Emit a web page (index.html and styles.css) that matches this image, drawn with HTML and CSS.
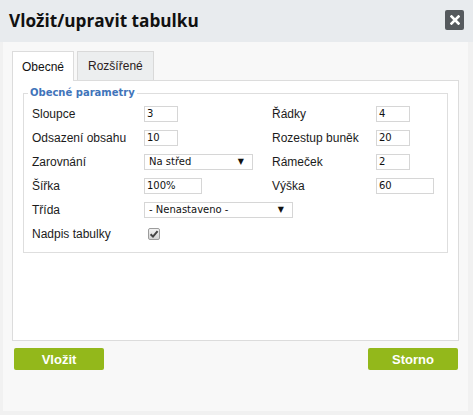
FILE: index.html
```html
<!DOCTYPE html>
<html lang="cs">
<head>
<meta charset="utf-8">
<title>Vložit/upravit tabulku</title>
<link rel="stylesheet" href="styles.css">
</head>
<body>
<div class="header">
  <h1 class="title">Vložit/upravit tabulku</h1>
  <button class="close" type="button" aria-label="Zavřít">
    <svg width="10" height="10" viewBox="0 0 10 10"><path d="M1.5 1.5 L8.5 8.5 M8.5 1.5 L1.5 8.5" stroke="#fff" stroke-width="2.6" stroke-linecap="square"/></svg>
  </button>
</div>
<div class="dialog">
  <div class="tabs">
    <div class="tab active">Obecné</div>
    <div class="tab">Rozšířené</div>
  </div>
  <div class="panel">
    <fieldset class="group">
      <legend>Obecné parametry</legend>
      <div class="grid">
        <label class="lbl">Sloupce</label>
        <div class="cell"><span class="field w34">3</span></div>
        <label class="lbl">Řádky</label>
        <div class="cell"><span class="field w34">4</span></div>

        <label class="lbl">Odsazení obsahu</label>
        <div class="cell"><span class="field w34">10</span></div>
        <label class="lbl">Rozestup buněk</label>
        <div class="cell"><span class="field w34">20</span></div>

        <label class="lbl">Zarovnání</label>
        <div class="cell"><span class="select w109"><span class="sel-text">Na střed</span><span class="arrow">▼</span></span></div>
        <label class="lbl">Rámeček</label>
        <div class="cell"><span class="field w34">2</span></div>

        <label class="lbl">Šířka</label>
        <div class="cell"><span class="field w58">100%</span></div>
        <label class="lbl">Výška</label>
        <div class="cell"><span class="field w58">60</span></div>

        <label class="lbl">Třída</label>
        <div class="cell span3"><span class="select w149"><span class="sel-text">- Nenastaveno -</span><span class="arrow">▼</span></span></div>

        <label class="lbl">Nadpis tabulky</label>
        <div class="cell span3"><span class="check"><svg width="10" height="10" viewBox="0 0 10 10"><path d="M1.6 5.2 L4 7.6 L8.6 2.2" fill="none" stroke="#444" stroke-width="2"/></svg></span></div>
      </div>
    </fieldset>
  </div>
  <div class="buttons">
    <button class="btn" type="button">Vložit</button>
    <button class="btn" type="button">Storno</button>
  </div>
</div>
</body>
</html>
```

FILE: styles.css
```css
html, body {
  margin: 0;
  padding: 0;
}
body {
  background: #f1f1f1;
  font-family: "Liberation Sans", Arial, sans-serif;
  width: 473px;
  height: 415px;
  overflow: hidden;
}
.header {
  height: 42px;
  background: #e8ebee;
  display: flex;
  align-items: center;
  justify-content: space-between;
  padding: 0 9px 0 9px;
  box-sizing: border-box;
}
.title {
  margin: 0;
  font-family: "Open Sans", sans-serif;
  font-weight: 700;
  font-size: 17.2px;
  color: #111;
  line-height: 20px;
  margin-top: -1px;
}
.close {
  width: 19px;
  height: 20px;
  border: 0;
  padding: 0;
  border-radius: 2px;
  background: #565a5e;
  display: flex;
  align-items: center;
  justify-content: center;
  margin-top: -3px;
}
.close svg { display: block; }
.dialog {
  margin: 0 5px 0 3px;
  height: 369px;
  background: #f8f8f8;
  padding: 9px 9px 0 9px;
  box-sizing: border-box;
}
.tabs {
  display: flex;
  gap: 3px;
  height: 29px;
  position: relative;
  z-index: 1;
}
.tab {
  box-sizing: border-box;
  height: 29px;
  border: 1px solid #d9d9d9;
  border-bottom: 0;
  background: #eceeef;
  font-size: 12px;
  color: #222;
  padding: 0 9px;
  display: flex;
  align-items: center;
  padding-top: 0;
}
.tab.active {
  background: #fff;
  height: 30px;
  border-color: #dcdcdc;
  color: #111;
}
.tab:not(.active) { padding: 0 10px; color: #2a2020; }
.panel {
  height: 261px;
  box-sizing: border-box;
  background: #fff;
  border: 1px solid #dcdcdc;
  padding: 0 10px;
}
.group {
  margin: 6px 0 0 0;
  border: 1px solid #dedede;
  padding: 3px 8px 6px 8px;
}
.group legend {
  font-family: "DejaVu Sans", Verdana, sans-serif;
  font-weight: 700;
  font-size: 10px;
  line-height: 12px;
  color: #3f74ba;
  padding: 0 2px;
  margin-left: -4px;
}
.grid {
  display: grid;
  grid-template-columns: 112px 128px 104px auto;
  grid-auto-rows: 24px;
  align-items: center;
}
.lbl {
  font-size: 12px;
  color: #1b1b1b;
  line-height: 14px;
}
.cell {
  display: flex;
  align-items: center;
}
.span3 { grid-column: span 3; }
.field, .select {
  box-sizing: border-box;
  height: 16px;
  border: 1px solid #d6d6d6;
  background: #fff;
  font-family: "DejaVu Sans", Verdana, sans-serif;
  font-size: 10px;
  color: #111;
  display: flex;
  align-items: center;
  padding: 0 2px;
  line-height: 12px;
}
.w34 { width: 34px; }
.w58 { width: 58px; }
.w109 { width: 109px; }
.w149 { width: 149px; }
.select {
  justify-content: space-between;
  padding: 0 8px 0 4px;
}
.arrow {
  font-size: 8px;
  color: #111;
  font-family: "DejaVu Sans", sans-serif;
}
.check {
  box-sizing: border-box;
  width: 12px;
  height: 12px;
  margin-left: 4px;
  border: 1px solid #9c9c9c;
  border-radius: 2px;
  background: linear-gradient(#f2f2f2, #d4d4d4);
  display: flex;
  align-items: center;
  justify-content: center;
}
.check svg { display: block; }
.buttons {
  display: flex;
  justify-content: space-between;
  margin: 7px 1px 0 2px;
}
.btn {
  width: 90px;
  height: 22px;
  border: 0;
  border-radius: 2px;
  background: #93b81b;
  color: #fff;
  font-family: "Liberation Sans", Arial, sans-serif;
  font-weight: 700;
  font-size: 13px;
  padding: 0;
}
```
